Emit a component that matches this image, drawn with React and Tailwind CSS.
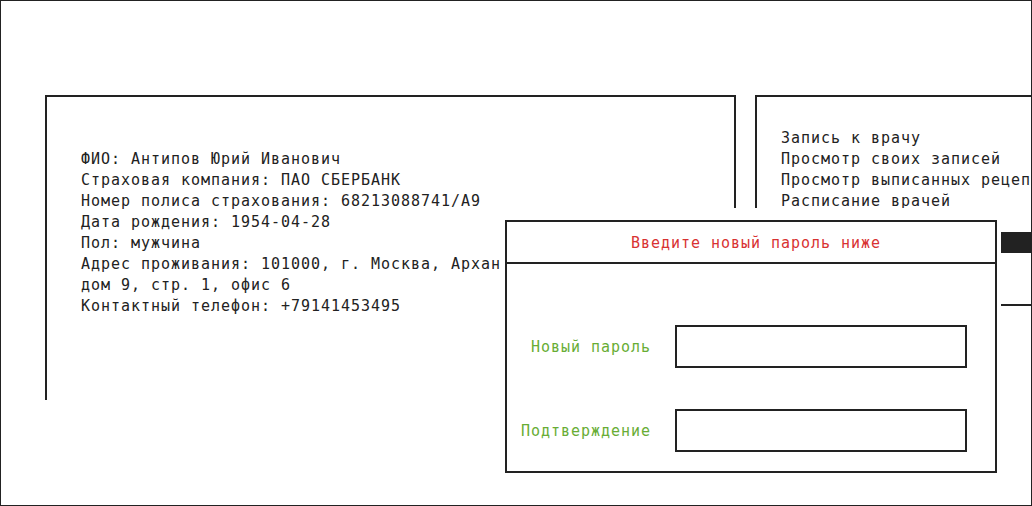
import React from 'react';

const patient = [
  'ФИО: Антипов Юрий Иванович',
  'Страховая компания: ПАО СБЕРБАНК',
  'Номер полиса страхования: 68213088741/A9',
  'Дата рождения: 1954-04-28',
  'Пол: мужчина',
  'Адрес проживания: 101000, г. Москва, Архангельский пер.,',
  'дом 9, стр. 1, офис 6',
  'Контактный телефон: +79141453495',
];

const menu = [
  'Запись к врачу',
  'Просмотр своих записей',
  'Просмотр выписанных рецептов',
  'Расписание врачей',
];

const App = () => {
  return (
    <div className="relative w-[1032px] h-[506px] overflow-hidden border border-[#222] bg-white font-['DejaVu_Sans_Mono',monospace] text-[15px] leading-[21px] tracking-[0.97px] text-[#222]">
      <div className="flex gap-[19px] pt-[94px] pl-[44px]">
        {/* patient card */}
        <div className="w-[691px] h-[305px] shrink-0 border-2 border-b-0 border-[#222] pt-[52px] pl-[34px]">
          {patient.map((line) => (
            <div key={line} className="whitespace-nowrap">{line}</div>
          ))}
        </div>

        {/* menu */}
        <div className="w-[400px] h-[305px] shrink-0 border-2 border-r-0 border-b-0 border-[#222] pt-[31px] pl-[24px]">
          {menu.map((item) => (
            <div key={item} className="whitespace-nowrap">{item}</div>
          ))}
          <div className="ml-[220px] mt-[20px] h-[21px] w-[60px] bg-[#222]" />
          <div className="ml-[220px] mt-[51px] h-[2px] w-[60px] bg-[#222]" />
        </div>
      </div>

      {/* modal backdrop area */}
      <div className="absolute left-[500px] top-[207px] w-[499px] h-[300px] bg-white" />

      {/* password modal */}
      <div className="absolute left-[504px] top-[219px] w-[492px] h-[253px] border-2 border-[#222] bg-white">
        <div className="h-[42px] flex items-center justify-center pl-[10px] pt-[2px] border-b-2 border-[#222] text-[#d83232]">
          Введите новый пароль ниже
        </div>
        <div className="pt-[61px]">
          <div className="flex items-center">
            <label className="w-[144px] text-right pt-[2px] text-[#68ad35]">Новый пароль</label>
            <input type="password" className="ml-[24px] w-[292px] h-[43px] border-2 border-[#222] bg-white outline-none" />
          </div>
          <div className="flex items-center mt-[41px]">
            <label className="w-[144px] text-right pt-[2px] text-[#68ad35]">Подтверждение</label>
            <input type="password" className="ml-[24px] w-[292px] h-[43px] border-2 border-[#222] bg-white outline-none" />
          </div>
        </div>
      </div>
    </div>
  );
};

export default App;
